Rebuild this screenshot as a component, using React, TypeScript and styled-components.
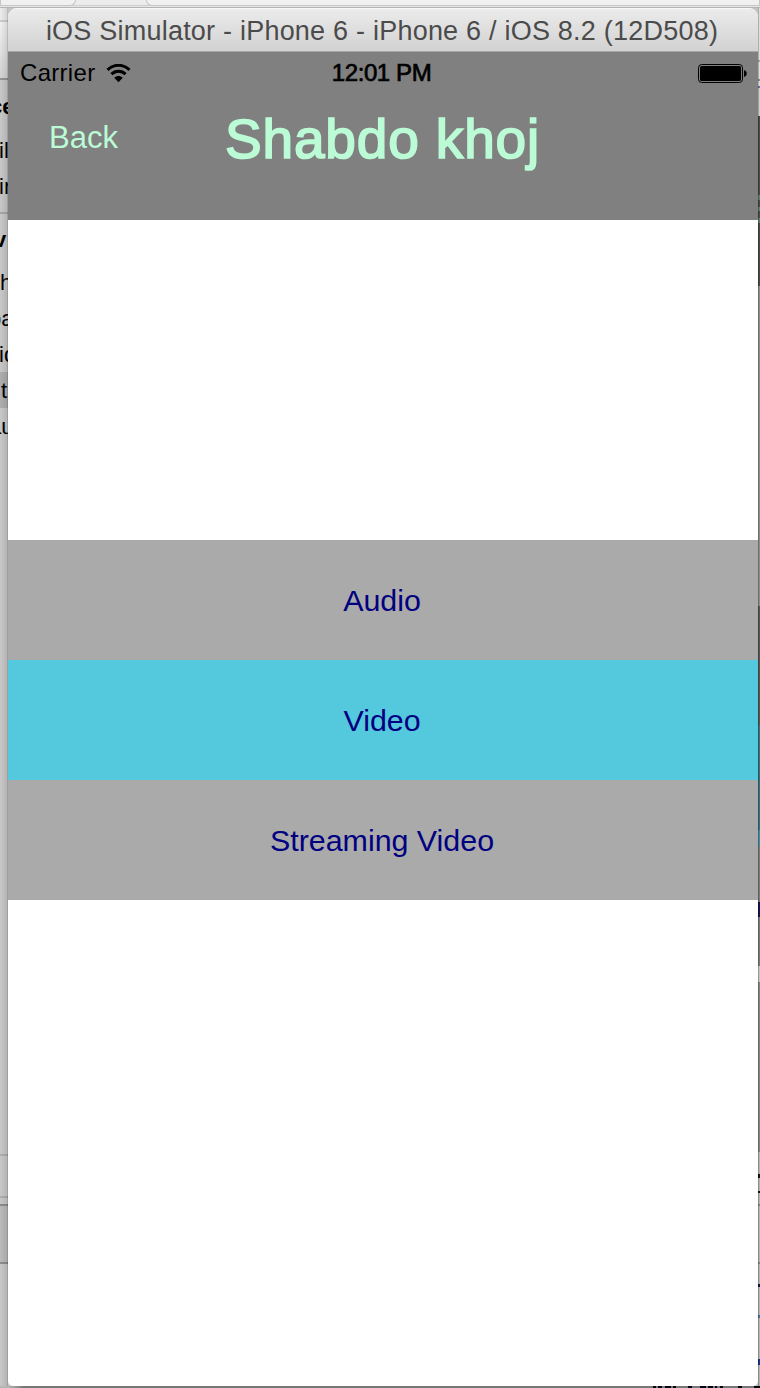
import React from "react";
import styled, { createGlobalStyle } from "styled-components";

const GlobalStyle = createGlobalStyle`
  * { box-sizing: border-box; }
  body { margin: 0; background: #c4c4c4; font-family: "Liberation Sans", Arial, sans-serif; }
`;

const Desktop = styled.div`
  display: flex;
  flex-direction: column;
  width: 760px;
  height: 1388px;
  overflow: hidden;
`;

const TabStrip = styled.div`
  display: flex;
  justify-content: space-between;
  height: 8px;
  background: linear-gradient(#ececec 0 5px, #cfcfcf 5px 6px, #e6e6e6 6px 7px, #b4b4b4 7px);
`;

const Tab = styled.div<{ $width: number; $side: "left" | "right" }>`
  width: ${(p) => p.$width}px;
  height: 6px;
  background: #f0f0f0;
  border: 1px solid #c6c6c6;
  border-top: 0;
  border-radius: ${(p) => (p.$side === "left" ? "0 0 6px 0" : "0 0 0 6px")};
`;

const Middle = styled.div`
  display: flex;
  height: 1378px;
`;

const Navigator = styled.aside`
  position: relative;
  width: 8px;
  overflow: hidden;
  background: #cacaca;
  &::after {
    content: "";
    position: absolute;
    inset: 0;
    background: linear-gradient(90deg, rgba(0, 0, 0, 0.01), rgba(0, 0, 0, 0.1) 85%, rgba(0, 0, 0, 0.3));
  }
`;

const NavBlock = styled.div<{ $height: number; $fill?: string; $line?: string }>`
  height: ${(p) => p.$height}px;
  background: ${(p) => p.$fill ?? "transparent"};
  border-bottom: ${(p) => (p.$line ? `2px solid ${p.$line}` : "0")};
`;

const NavItem = styled.div<{ $height?: number; $shift?: number; $bold?: boolean; $selected?: boolean }>`
  display: flex;
  align-items: center;
  height: ${(p) => p.$height ?? 36}px;
  padding-top: 2px;
  text-indent: ${(p) => p.$shift ?? 0}px;
  white-space: nowrap;
  font-size: 22px;
  font-weight: ${(p) => (p.$bold ? 700 : 400)};
  color: #000;
  background: ${(p) => (p.$selected ? "#b0b0b0" : "transparent")};
`;

const Window = styled.main`
  display: flex;
  flex-direction: column;
  width: 750px;
  overflow: hidden;
  border-radius: 9px 9px 5px 5px;
  background: #fff;
`;

const TitleBar = styled.header`
  display: flex;
  align-items: center;
  justify-content: center;
  height: 44px;
  padding: 2px 2px 0 0;
  border-top: 1px solid #f7f7f7;
  border-bottom: 1px solid #a6a6a6;
  background: linear-gradient(#ebebeb, #d2d2d2);
  color: #4b4b4b;
  font-size: 27px;
  letter-spacing: 0.22px;
  white-space: nowrap;
`;

const AppHeader = styled.section`
  height: 168px;
  background: #808080;
`;

const StatusBar = styled.div`
  display: grid;
  grid-template-columns: 1fr auto 1fr;
  align-items: center;
  height: 40px;
  padding: 2px 11px 0 12px;
  font-size: 24px;
  color: #000;
`;

const Carrier = styled.div`
  display: flex;
  align-items: center;
  gap: 11px;
  letter-spacing: 0.3px;
`;

const Clock = styled.div`
  -webkit-text-stroke: 0.7px #000;
  white-space: nowrap;
  margin-left: -4px;
  letter-spacing: -0.4px;
`;

const BatterySlot = styled.div`
  display: flex;
  justify-content: flex-end;
`;

const NavBar = styled.div`
  display: grid;
  grid-template-columns: 150px 1fr 150px;
  align-items: center;
  height: 90px;
  color: #bbfbd6;
`;

const BackButton = styled.button`
  justify-self: start;
  margin-left: 41px;
  padding: 1px 0 0;
  border: 0;
  background: none;
  color: inherit;
  font: 31px "Liberation Sans", Arial, sans-serif;
`;

const ScreenTitle = styled.h1`
  margin: 0;
  padding: 3px 1px 0 0;
  text-align: center;
  font-size: 55px;
  font-weight: 400;
  letter-spacing: 0.85px;
  -webkit-text-stroke: 1.7px #bbfbd6;
  white-space: nowrap;
`;

const Menu = styled.nav`
  display: flex;
  flex-direction: column;
  margin-top: 320px;
`;

const MenuButton = styled.button<{ $active?: boolean }>`
  height: 120px;
  padding: 1px 2px 0 0;
  border: 0;
  background: ${(p) => (p.$active ? "#54c8dc" : "#aaaaaa")};
  color: #000080;
  font: 30.4px "Liberation Sans", Arial, sans-serif;
`;

const EdgeStrip = styled.aside`
  width: 2px;
`;

const EdgeBand = styled.div<{ $height: number; $fill: string }>`
  height: ${(p) => p.$height}px;
  background: ${(p) => p.$fill};
  border-left: 1px solid rgba(0, 0, 0, 0.22);
`;

const Footer = styled.div`
  display: flex;
  justify-content: flex-end;
  height: 2px;
  background: linear-gradient(90deg, #b5b5b5 8px, #777 24px, #777);
`;

const FooterMark = styled.i<{ $width: number; $gap: number }>`
  width: ${(p) => p.$width}px;
  margin-right: ${(p) => p.$gap}px;
  background: #050514;
`;

const edge: [number, string][] = [
  [52, "#dedede"], [2, "#a9a9a9"], [17, "#dedede"], [2, "#909090"], [5, "#dedede"], [2, "#6870a8"],
  [28, "#d0d0d0"], [79, "#4a4a4a"], [5, "#558571"], [7, "#4a4a4a"], [4, "#558571"], [7, "#4a4a4a"],
  [5, "#558571"], [63, "#4a4a4a"], [320, "#8c8c8c"], [119, "#555555"], [105, "#33717c"],
  [16, "#3f8d9b"], [56, "#797979"], [15, "#15144e"], [49, "#797979"], [16, "#c4c4c4"],
  [170, "#838383"], [22, "#b4b4b4"], [4, "#15110c"], [13, "#b4b4b4"], [2, "#111111"],
  [11, "#b4b4b4"], [2, "#858585"], [56, "#b4b4b4"], [2, "#858585"], [20, "#b4b4b4"],
  [3, "#101545"], [28, "#b4b4b4"], [3, "#3a77a8"], [41, "#b4b4b4"], [6, "#123c85"], [22, "#b4b4b4"],
];

const marks: [number, number][] = [[3, 2], [4, 3], [6, 2], [3, 12], [4, 8], [6, 2], [5, 2], [2, 3], [3, 15], [4, 12], [6, 0]];

const Wifi = () => (
  <svg width="25" height="19" viewBox="0 0 25 19" aria-label="Wi-Fi">
    <path d="M1.5 5.9C7.8-.3 17.2-.3 23.5 5.9M5.4 10.1c4-3.9 10.2-3.9 14.2 0" fill="none" stroke="#000" strokeWidth="3" />
    <path d="M12.5 18.2 8.2 13.8c2.5-2.3 6.1-2.3 8.6 0z" />
  </svg>
);

const Battery = () => (
  <svg width="49" height="19" viewBox="0 0 49 19" aria-label="Battery full">
    <rect x=".5" y=".5" width="44" height="18" rx="3.2" fill="none" stroke="#000" />
    <rect x="2" y="2" width="41" height="15" rx="1.6" />
    <path d="M46 6.2c3.6 0 3.6 6.6 0 6.6z" />
  </svg>
);

export default function App() {
  return (
    <>
      <GlobalStyle />
      <Desktop>
        <TabStrip>
          <Tab $width={76} $side="left" />
          <Tab $width={614} $side="right" />
        </TabStrip>
        <Middle>
          <Navigator>
            <NavBlock $height={14} $fill="#eeeeee" $line="#cfcfcf" />
            <NavBlock $height={58} $fill="linear-gradient(#f4f4f4, #d5d5d5)" $line="#969696" />
            <NavItem $height={52} $shift={-10} $bold>ce</NavItem>
            <NavItem $shift={-1}>il</NavItem>
            <NavItem $shift={-1}>in</NavItem>
            <NavBlock $height={10} $line="#a9a9a9" />
            <NavItem $height={50} $shift={-6} $bold>v</NavItem>
            <NavItem $shift={0}>h</NavItem>
            <NavItem $shift={-11}>ba</NavItem>
            <NavItem $shift={-1}>id</NavItem>
            <NavItem $shift={1} $selected>t</NavItem>
            <NavItem $shift={-11}>au</NavItem>
            <NavBlock $height={712} $line="#b0b0b0" />
            <NavBlock $height={42} $line="#b0b0b0" />
            <NavBlock $height={8} $line="#8e8e8e" />
            <NavBlock $height={58} $fill="#bdbdbd" $line="#8e8e8e" />
          </Navigator>
          <Window>
            <TitleBar>iOS Simulator - iPhone 6 - iPhone 6 / iOS 8.2 (12D508)</TitleBar>
            <AppHeader>
              <StatusBar>
                <Carrier>Carrier<Wifi /></Carrier>
                <Clock>12:01 PM</Clock>
                <BatterySlot><Battery /></BatterySlot>
              </StatusBar>
              <NavBar>
                <BackButton>Back</BackButton>
                <ScreenTitle>Shabdo khoj</ScreenTitle>
              </NavBar>
            </AppHeader>
            <Menu>
              <MenuButton>Audio</MenuButton>
              <MenuButton $active>Video</MenuButton>
              <MenuButton>Streaming Video</MenuButton>
            </Menu>
          </Window>
          <EdgeStrip>
            {edge.map(([height, fill], i) => <EdgeBand key={i} $height={height} $fill={fill} />)}
          </EdgeStrip>
        </Middle>
        <Footer>
          {marks.map(([width, gap], i) => <FooterMark key={i} $width={width} $gap={gap} />)}
        </Footer>
      </Desktop>
    </>
  );
}
